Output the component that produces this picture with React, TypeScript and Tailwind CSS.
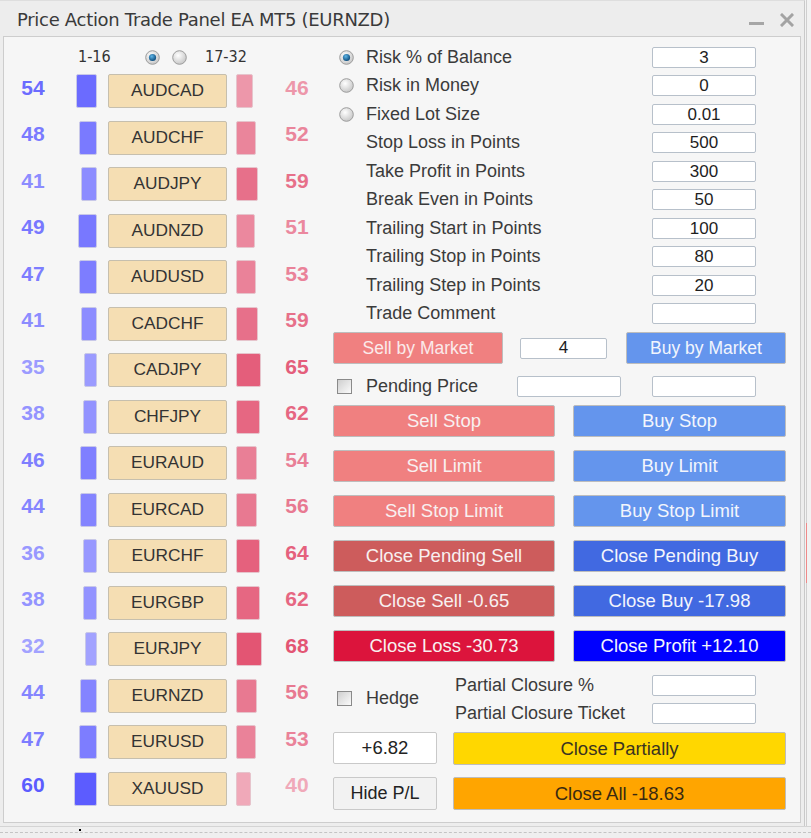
import React from "react";

const pairs: [string, number][] = [
  ["AUDCAD", 54], ["AUDCHF", 48], ["AUDJPY", 41], ["AUDNZD", 49],
  ["AUDUSD", 47], ["CADCHF", 41], ["CADJPY", 35], ["CHFJPY", 38],
  ["EURAUD", 46], ["EURCAD", 44], ["EURCHF", 36], ["EURGBP", 38],
  ["EURJPY", 32], ["EURNZD", 44], ["EURUSD", 47], ["XAUUSD", 60],
];

function blue(v: number) {
  const c = Math.round(92 + (60 - v) * 2.5);
  return `rgb(${c},${c},255)`;
}
function red(v: number) {
  const d = 68 - v;
  return `rgb(${Math.round(227 + d * 0.45)},${Math.round(85 + d * 3)},${Math.round(115 + d * 2.5)})`;
}

function Radio({ on }: { on: boolean }) {
  return (
    <svg width="15" height="15" viewBox="0 0 15 15" className="shrink-0">
      <defs>
        <radialGradient id="rg-off" cx="40%" cy="35%" r="70%">
          <stop offset="0" stopColor="#ffffff" />
          <stop offset="1" stopColor="#c4c4c4" />
        </radialGradient>
        <radialGradient id="rg-on" cx="40%" cy="35%" r="65%">
          <stop offset="0" stopColor="#5fb6e8" />
          <stop offset="1" stopColor="#0d4c7c" />
        </radialGradient>
      </defs>
      <circle cx="7.5" cy="7.5" r="6.8" fill="url(#rg-off)" stroke="#9c9c9c" strokeWidth="1" />
      {on && <circle cx="7.5" cy="7.5" r="3.6" fill="url(#rg-on)" />}
    </svg>
  );
}

function Check() {
  return (
    <div className="w-[15px] h-[15px] shrink-0 border border-[#8a8a8a] bg-linear-to-br from-[#cfcfcf] to-[#fbfbfb]" />
  );
}

function Input({ value, className }: { value?: string; className: string }) {
  return (
    <div
      className={`h-[21px] bg-white border border-[#b7c0ca] rounded-[2px] flex items-center justify-center text-[17px] text-[#1e1e1e] shrink-0 ${className}`}
    >
      {value}
    </div>
  );
}

function Btn({ children, className }: { children: React.ReactNode; className: string }) {
  return (
    <div
      className={`flex items-center justify-center border border-[#bdbdbd] rounded-[2px] shrink-0 ${className}`}
    >
      {children}
    </div>
  );
}

const settings: [string, string, number][] = [
  ["Risk % of Balance", "3", 1],
  ["Risk in Money", "0", 0],
  ["Fixed Lot Size", "0.01", 0],
  ["Stop Loss in Points", "500", -1],
  ["Take Profit in Points", "300", -1],
  ["Break Even in Points", "50", -1],
  ["Trailing Start in Points", "100", -1],
  ["Trailing Stop in Points", "80", -1],
  ["Trailing Step in Points", "20", -1],
  ["Trade Comment", "", -1],
];

const orderRows: [string, string, string, string][] = [
  ["Sell Stop", "bg-[#f08080]", "Buy Stop", "bg-[#6495ed]"],
  ["Sell Limit", "bg-[#f08080]", "Buy Limit", "bg-[#6495ed]"],
  ["Sell Stop Limit", "bg-[#f08080]", "Buy Stop Limit", "bg-[#6495ed]"],
  ["Close Pending Sell", "bg-[#cd5c5c]", "Close Pending Buy", "bg-[#4169e1]"],
  ["Close Sell -0.65", "bg-[#cd5c5c]", "Close Buy -17.98", "bg-[#4169e1]"],
  ["Close Loss -30.73", "bg-[#dc143c]", "Close Profit +12.10", "bg-[#0000ff]"],
];

export default function App() {
  return (
    <div className="w-[811px] h-[838px] flex flex-col overflow-hidden bg-[#efefef] font-['Liberation_Sans',Arial,sans-serif]">
      <div className="flex h-[826px]">
        {/* window */}
        <div className="w-[805px] h-full flex flex-col bg-[#ededed] border-r border-[#c9c9c9] border-t border-t-[#dedede]">
          {/* title bar */}
          <div className="h-[35px] flex items-center pl-[17px] pr-[10px]">
            <div className="text-[18px] text-[#3a3a3a] font-['DejaVu_Sans','Liberation_Sans',sans-serif] tracking-[-0.3px] mt-[1px]">
              Price Action Trade Panel EA MT5 (EURNZD)
            </div>
            <div className="flex-1" />
            <div className="w-[15px] h-[3px] bg-[#a6a6a6] mt-[9px]" />
            <svg width="14" height="14" viewBox="0 0 14 14" className="ml-[16px] mt-[2px]">
              <path d="M2 2 L12 12 M12 2 L2 12" stroke="#a3a3a3" strokeWidth="3" strokeLinecap="square" />
            </svg>
          </div>
          {/* panel */}
          <div className="mx-[3px] mb-[3px] flex-1 bg-[#f6f6f6] border border-[#cdcdcd] flex">
            {/* left column */}
            <div className="w-[319px] pt-[9px] flex flex-col">
              <div className="h-[22px] flex items-center text-[16px] text-[#333] font-['DejaVu_Sans_Condensed','Liberation_Sans_Narrow','Liberation_Sans',sans-serif]">
                <span className="ml-[74px] w-[33px]">1-16</span>
                <span className="ml-[34px]"><Radio on /></span>
                <span className="ml-[12px]"><Radio on={false} /></span>
                <span className="ml-[18px]">17-32</span>
              </div>
              {pairs.map(([name, v]) => {
                const r = 100 - v;
                return (
                  <div key={name} className="h-[46.5px] flex items-center">
                    <div className="w-[58px] mb-[8px] text-center text-[21px] font-bold" style={{ color: blue(v) }}>
                      {v}
                    </div>
                    <div className="w-[35px] flex justify-end">
                      <div
                        className="h-[34px] rounded-[2px] border border-[#c8c8e8]"
                        style={{ width: Math.round(v * 0.38), background: blue(v) }}
                      />
                    </div>
                    <div className="ml-[11px] w-[119px] h-[34px] bg-[#f5deb3] border border-[#c6bfae] rounded-[2px] flex items-center justify-center text-[17.3px] text-[#333]">
                      {name}
                    </div>
                    <div className="ml-[9px] w-[35px] flex justify-start">
                      <div
                        className="h-[34px] rounded-[2px] border border-[#e6c4cc]"
                        style={{ width: Math.round(r * 0.38), background: red(r) }}
                      />
                    </div>
                    <div className="w-[52px] mb-[8px] text-center text-[21px] font-bold" style={{ color: red(r) }}>
                      {r}
                    </div>
                  </div>
                );
              })}
            </div>

            {/* right column */}
            <div className="ml-[10px] w-[453px] pt-[6px] flex flex-col text-[18px] text-[#3b3b3b]">
              {settings.map(([label, val, radio]) => (
                <div key={label} className="h-[28.5px] flex items-center">
                  {radio >= 0 ? (
                    <span className="ml-[6px] mr-[12px] flex"><Radio on={radio === 1} /></span>
                  ) : (
                    <span className="w-[33px]" />
                  )}
                  <span className="flex-1">{label}</span>
                  <Input value={val} className="w-[104px] mr-[30px]" />
                </div>
              ))}

              <div className="mt-[4px] h-[32px] flex items-center">
                <Btn className="w-[170px] h-[32px] bg-[#f08080] text-[17.5px] text-[#fbeaea]">Sell by Market</Btn>
                <Input value="4" className="ml-[17px] w-[87px]" />
                <Btn className="ml-[19px] w-[160px] h-[32px] bg-[#6495ed] text-[17.5px] text-[#f2f5fd]">Buy by Market</Btn>
              </div>

              <div className="mt-[12px] h-[21px] flex items-center">
                <span className="ml-[4px]"><Check /></span>
                <span className="ml-[14px] w-[151px]">Pending Price</span>
                <Input className="w-[104px]" />
                <Input className="ml-[31px] w-[104px]" />
              </div>

              <div className="mt-[8px] flex flex-col gap-[13px]">
                {orderRows.map(([s, sc, b, bc]) => (
                  <div key={s} className="h-[32px] flex">
                    <Btn className={`w-[222px] h-[32px] text-[18.5px] text-[#f8f0f0] ${sc}`}>{s}</Btn>
                    <Btn className={`ml-[18px] w-[213px] h-[32px] text-[18.5px] text-[#f3f5fc] ${bc}`}>{b}</Btn>
                  </div>
                ))}
              </div>

              <div className="mt-[13px] h-[49px] flex">
                <div className="w-[122px] flex items-center pb-[3px]">
                  <span className="ml-[4px]"><Check /></span>
                  <span className="ml-[14px]">Hedge</span>
                </div>
                <div className="flex flex-col gap-[7px]">
                  <div className="h-[21px] flex items-center">
                    <span className="w-[197px]">Partial Closure %</span>
                    <Input className="w-[104px]" />
                  </div>
                  <div className="h-[21px] flex items-center">
                    <span className="w-[197px]">Partial Closure Ticket</span>
                    <Input className="w-[104px]" />
                  </div>
                </div>
              </div>

              <div className="mt-[8px] h-[32px] flex">
                <Btn className="w-[104px] h-[32px] bg-white border-[#c9c9c9] text-[18.5px] text-[#222]">+6.82</Btn>
                <Btn className="ml-[16px] w-[333px] h-[33px] bg-[#ffd700] text-[18.5px] text-[#3a3320]">Close Partially</Btn>
              </div>
              <div className="mt-[13px] h-[33px] flex">
                <Btn className="w-[104px] h-[33px] bg-[#f2f2f2] border-[#c9c9c9] text-[18px] text-[#222]">Hide P/L</Btn>
                <Btn className="ml-[16px] w-[333px] h-[33px] bg-[#ffa500] text-[18.5px] text-[#3a2a10]">Close All -18.63</Btn>
              </div>
            </div>
          </div>
        </div>
        {/* chart strip at right */}
        <div className="flex-1 flex bg-[#f2f2f2]">
          <div className="ml-[1px] w-[1px] h-full flex flex-col bg-[#cfcfcf]">
            <div className="h-[523px]" />
            <div className="h-[60px] bg-[#f08a8a]" />
          </div>
        </div>
      </div>
      {/* bottom chart strip */}
      <div className="h-[12px] bg-[#efefef] border-t border-[#d4d4d4] flex flex-col">
        <div className="h-[5px] flex">
          <div className="ml-[79px] mt-[2px] w-[2px] h-[2px] bg-black" />
        </div>
        <div className="border-t border-dashed border-[#c4c4c4]" />
      </div>
    </div>
  );
}
